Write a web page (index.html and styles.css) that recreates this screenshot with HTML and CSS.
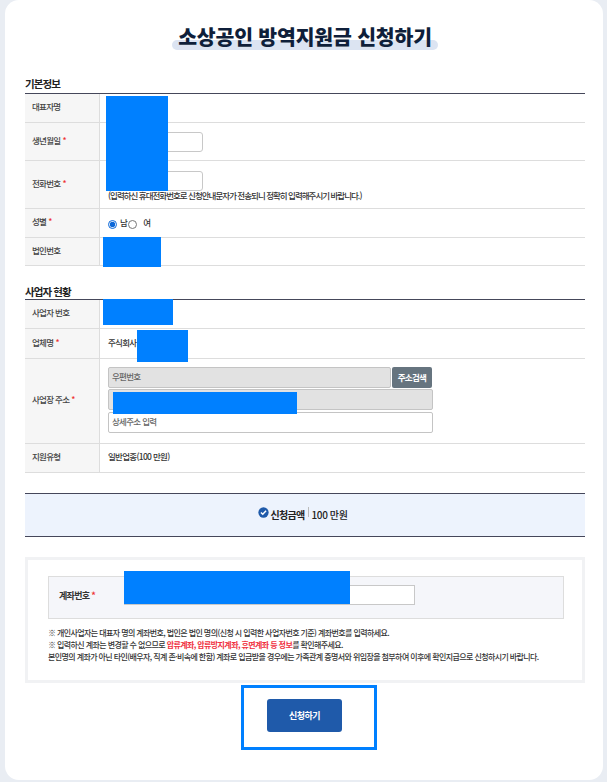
FILE: index.html
```html
<!DOCTYPE html>
<html lang="ko">
<head>
<meta charset="utf-8">
<title>소상공인 방역지원금 신청하기</title>
<link rel="stylesheet" href="styles.css">
</head>
<body>
<main class="card">
  <h1 class="title"><span>소상공인 방역지원금 신청하기</span></h1>

  <h2 class="section-title first">기본정보</h2>
  <div class="table">
    <div class="row h29"><div class="label">대표자명</div><div class="value"></div></div>
    <div class="row h38"><div class="label">생년월일 <i>*</i></div><div class="value"><input class="short" type="text"></div></div>
    <div class="row h48"><div class="label">전화번호 <i>*</i></div><div class="value stack"><input class="short" type="text"><p class="hint">(입력하신 휴대전화번호로 신청안내문자가 전송되니 정확히 입력해주시기 바랍니다.)</p></div></div>
    <div class="row h29"><div class="label">성별 <i>*</i></div><div class="value radios"><input type="radio" name="g" checked><span>남</span><input type="radio" name="g"><span class="far">여</span></div></div>
    <div class="row h28"><div class="label">법인번호</div><div class="value"></div></div>
  </div>

  <h2 class="section-title second">사업자 현황</h2>
  <div class="table">
    <div class="row h29"><div class="label">사업자 번호</div><div class="value"></div></div>
    <div class="row h30"><div class="label">업체명 <i>*</i></div><div class="value">주식회사</div></div>
    <div class="row h85"><div class="label">사업장 주소 <i>*</i></div>
      <div class="value address">
        <div class="zip"><input class="field grey" type="text" placeholder="우편번호" readonly><button class="search" type="button">주소검색</button></div>
        <input class="field grey" type="text" readonly>
        <input class="field detail" type="text" placeholder="상세주소 입력">
      </div>
    </div>
    <div class="row h29"><div class="label">지원유형</div><div class="value">일반업종(100 만원)</div></div>
  </div>

  <div class="amount">
    <svg class="check" viewBox="0 0 12 12" width="11" height="11"><circle cx="6" cy="6" r="5.6" fill="#1f5aaa"/><path d="M3.2 6.1 5.2 8 8.8 4.2" fill="none" stroke="#fff" stroke-width="1.6"/></svg>
    <strong>신청금액</strong><span class="sep"></span><span class="money">100 만원</span>
  </div>

  <section class="account">
    <div class="account-row">
      <div class="account-label">계좌번호 <i>*</i></div>
      <input class="account-input" type="text">
    </div>
    <div class="notes">
      <p>※ 개인사업자는 대표자 명의 계좌번호, 법인은 법인 명의(신청 시 입력한 사업자번호 기준) 계좌번호를 입력하세요.</p>
      <p>※ 입력하신 계좌는 변경할 수 없으므로 <b>압류계좌, 압류방지계좌, 휴면계좌 등 정보</b>를 확인해주세요.</p>
      <p>본인명의 계좌가 아닌 타인(배우자, 직계 존·비속에 한함) 계좌로 입금받을 경우에는 가족관계 증명서와 위임장을 첨부하여 이후에 확인지급으로 신청하시기 바랍니다.</p>
    </div>
  </section>

  <div class="actions"><button class="submit" type="button">신청하기</button></div>

  <div class="mask m1"></div>
  <div class="mask m2"></div>
  <div class="mask m3"></div>
  <div class="mask m4"></div>
  <div class="mask m5"></div>
  <div class="mask m6"></div>
  <div class="frame"></div>
</main>
</body>
</html>
```

FILE: styles.css
```css
* { box-sizing: border-box; }
html, body { margin: 0; height: 782px; overflow: hidden; }
body {
  background: #e9edf3;
  font-family: "Noto Sans CJK KR", "Noto Sans", sans-serif;
  color: #333;
  padding-left: 5px;
  font-size: 8.5px;
  letter-spacing: -0.7px;
}
.card {
  position: relative;
  width: 598px;
  height: 780px;
  background: #fff;
  border-radius: 14px;
  padding: 0 18px 0 20px;
}
i { color: #e33; font-style: normal; }
.title {
  margin: 0;
  padding-top: 21px;
  height: 77px;
  text-align: center;
  font-size: 20.5px;
  line-height: 30px;
  font-weight: 900;
  letter-spacing: -0.2px;
  color: #0f1f3a;
}
.title span {
  position: relative;
  display: inline-block;
  z-index: 0;
}
.title span::after {
  content: "";
  position: absolute;
  z-index: -1;
  left: -6px;
  right: -6px;
  top: 19px;
  height: 10px;
  border-radius: 5px;
  background: #dce4f2;
}
.section-title {
  margin: 0;
  font-size: 10.5px;
  line-height: 14px;
  font-weight: 700;
  color: #222;
  height: 16px;
  letter-spacing: -0.9px;
}
.section-title.second { margin-top: 19px; height: 14px; }
.table { border-top: 1px solid #45475a; }
.row { display: flex; border-bottom: 1px solid #ddd; }
.h28 { height: 28px; }
.h29 { height: 29px; }
.h30 { height: 30px; }
.h38 { height: 38px; }
.h48 { height: 48px; }
.h85 { height: 85px; }
.label {
  flex: 0 0 75px;
  display: flex;
  align-items: center;
  gap: 2px;
  padding: 0 0 4px 7px;
  background: #f6f6f6;
  border-right: 1px solid #ddd;
  color: #444;
  font-weight: 500;
}
.value {
  flex: 1;
  display: flex;
  align-items: center;
  padding: 0 0 4px 8px;
  color: #333;
  font-weight: 500;
}
.short {
  width: 95px;
  height: 20px;
  margin-top: 4px;
  border: 1px solid #c8c8c8;
  border-radius: 3px;
  background: #fff;
}
.stack { flex-direction: column; align-items: flex-start; padding: 10px 0 0 8px; }
.stack .short { margin-top: 0; }
.hint { margin: -2px 0 0; line-height: 12px; letter-spacing: -0.98px; }
.radios { padding-bottom: 0; }
.radios input { margin: 2px 3px 0 0; width: 9px; height: 9px; accent-color: #0a66d8; }
.radios span { margin: -3px 1px 0 0; font-weight: 500; }
.radios .far { margin-left: 3px; }
.address {
  flex-direction: column;
  align-items: flex-start;
  gap: 1px;
  padding: 8px 0 0 8px;
}
.zip { display: flex; gap: 1px; width: 324px; }
.field {
  display: block;
  width: 325px;
  height: 21px;
  padding: 0 3px 3px;
  border: 1px solid #c4c4c4;
  border-radius: 2px;
  background: #fff;
  font: inherit;
  letter-spacing: inherit;
}
.detail { margin-top: 1px; }
.field::placeholder { color: #666; }
.grey { background: #e2e2e2; }
.zip .field { width: 283px; flex: none; }
.search {
  flex: none;
  width: 40px;
  height: 21px;
  padding: 0 0 2px;
  border: 0;
  border-radius: 2px;
  background: #66747f;
  color: #fff;
  font: inherit;
  font-weight: 700;
  letter-spacing: inherit;
}
.amount {
  display: flex;
  align-items: center;
  justify-content: center;
  margin-top: 20px;
  height: 44px;
  padding: 0 5px 2px 0;
  border-top: 1px solid #45475a;
  border-bottom: 1px solid #45475a;
  background: #edf3fd;
  font-size: 10px;
  color: #222;
}
.check { margin: -4px 2px 0 0; }
.amount strong { font-weight: 700; }
.sep { width: 1px; height: 10px; margin: -5px 3px 0 3px; background: #bbb; }
.money { font-weight: 500; letter-spacing: -0.4px; }
.account {
  margin-top: 20px;
  height: 126px;
  padding: 16px 18px 0 20px;
  border: 3px solid #f1f2f4;
}
.account-row {
  display: flex;
  align-items: center;
  height: 43px;
  padding: 0 0 5px 10px;
  background: #f5f6fa;
  border: 1px solid #ddd;
}
.account-label {
  flex: 0 0 65px;
  font-size: 9px;
  font-weight: 700;
  color: #333;
}
.account-input {
  width: 291px;
  height: 20px;
  border: 1px solid #c8c8c8;
  background: #fff;
}
.notes { margin-top: 8px; color: #333; font-weight: 500; font-size: 8px; letter-spacing: -0.6px; }
.notes p { margin: 0; line-height: 12px; white-space: nowrap; }
.notes b { color: #f03040; font-weight: 700; }
.actions { display: flex; justify-content: center; padding: 16px 1px 0 0; }
.submit {
  width: 75px;
  height: 33px;
  border: 0;
  border-radius: 3px;
  background: #1f5aaa;
  color: #fff;
  font: inherit;
  font-size: 9px;
  font-weight: 700;
  letter-spacing: -0.5px;
}
.mask { position: absolute; background: #0080ff; }
.m1 { left: 101px; top: 96px; width: 62px; height: 95px; }
.m2 { left: 98px; top: 237px; width: 58px; height: 30px; }
.m3 { left: 98px; top: 299px; width: 70px; height: 26px; }
.m4 { left: 132px; top: 330px; width: 51px; height: 32px; }
.m5 { left: 108px; top: 392px; width: 184px; height: 22px; }
.m6 { left: 119px; top: 571px; width: 226px; height: 33px; }
.frame {
  position: absolute;
  left: 236px;
  top: 685px;
  width: 136px;
  height: 65px;
  border: 3px solid #0080ff;
}
```
